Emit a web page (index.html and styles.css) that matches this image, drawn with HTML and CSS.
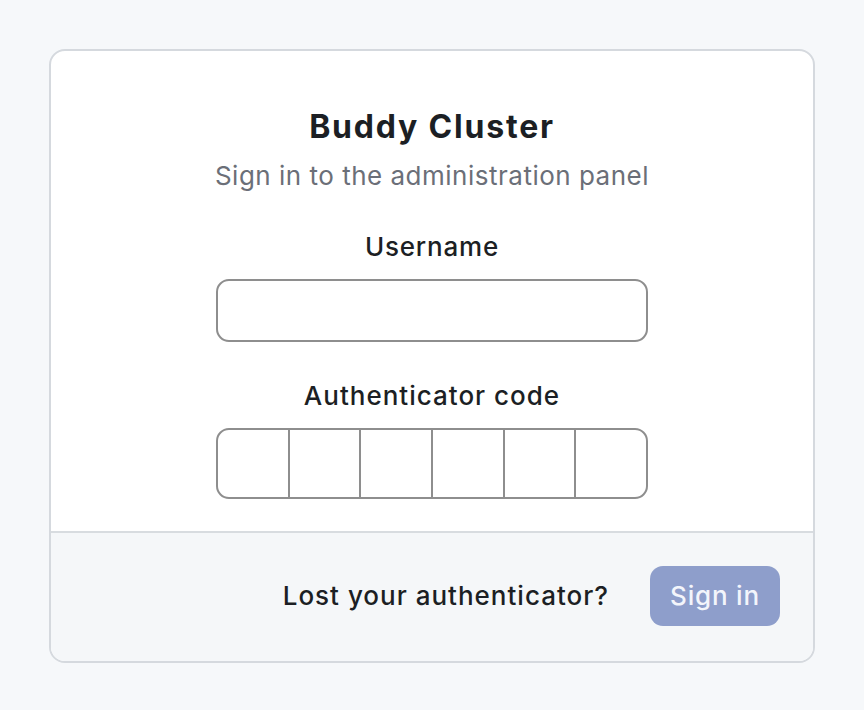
FILE: index.html
```html
<!DOCTYPE html>
<html lang="en">
<head>
<meta charset="utf-8">
<title>Buddy Cluster — Sign in</title>
<link rel="stylesheet" href="styles.css">
</head>
<body>
<main class="card">
  <form class="card-body">
    <h1 class="title">Buddy Cluster</h1>
    <p class="subtitle">Sign in to the administration panel</p>
    <label class="label" for="username">Username</label>
    <input class="text-input" id="username" type="text">
    <label class="label label-code">Authenticator code</label>
    <div class="code">
      <input class="code-cell" type="text" maxlength="1">
      <input class="code-cell" type="text" maxlength="1">
      <input class="code-cell" type="text" maxlength="1">
      <input class="code-cell" type="text" maxlength="1">
      <input class="code-cell" type="text" maxlength="1">
      <input class="code-cell" type="text" maxlength="1">
    </div>
  </form>
  <footer class="card-footer">
    <a class="lost-link" href="#">Lost your authenticator?</a>
    <button class="btn-signin" type="button">Sign in</button>
  </footer>
</main>
</body>
</html>
```

FILE: styles.css
```css
* { box-sizing: border-box; }
html, body { margin: 0; padding: 0; }
body {
  background: #f6f8fa;
  font-family: Inter, "Noto Sans", "Liberation Sans", sans-serif;
  color: #1c1f24;
  padding: 49px 0 48px;
}
.card {
  width: 766px;
  margin: 0 auto;
  background: #ffffff;
  border: 2px solid #d5d9de;
  border-radius: 16px;
  overflow: hidden;
}
.card-body {
  display: flex;
  flex-direction: column;
  align-items: center;
  padding: 56px 0 32px;
  margin: 0;
}
.title {
  margin: 0;
  font-size: 32px;
  line-height: 40px;
  font-weight: 700;
  letter-spacing: 1.8px;
  color: #1c1f24;
}
.subtitle {
  margin: 13px 0 0;
  font-size: 26px;
  line-height: 32px;
  letter-spacing: 0.5px;
  color: #6b6f78;
}
.label {
  display: block;
  margin-top: 39px;
  font-size: 26px;
  line-height: 32px;
  font-weight: 500;
  letter-spacing: 0.8px;
  color: #1c1f24;
}
.label-code { margin-top: 38px; letter-spacing: 1px; }
.text-input {
  margin-top: 16px;
  width: 432px;
  height: 63px;
  border: 2px solid #8e8e8e;
  border-radius: 13px;
  background: #fff;
  font: inherit;
  font-size: 24px;
  padding: 0 16px;
  outline: none;
}
.code {
  margin-top: 16px;
  width: 432px;
  height: 71px;
  display: flex;
  border: 2px solid #8e8e8e;
  border-radius: 13px;
  overflow: hidden;
  background: #fff;
}
.code-cell {
  flex: 1;
  min-width: 0;
  border: 0;
  border-left: 2px solid #8e8e8e;
  background: transparent;
  font: inherit;
  font-size: 28px;
  text-align: center;
  outline: none;
}
.code-cell:first-child { border-left: 0; }
.card-footer {
  border-top: 2px solid #d8dce0;
  background: #f5f7f9;
  height: 130px;
  display: flex;
  align-items: center;
  justify-content: flex-end;
  gap: 41px;
  padding: 0 33px 3px 0;
}
.lost-link {
  font-size: 26px;
  line-height: 32px;
  font-weight: 500;
  letter-spacing: 1px;
  color: #1c1f24;
  text-decoration: none;
}
.btn-signin {
  width: 130px;
  height: 60px;
  border: 0;
  border-radius: 13px;
  background: #8e9ecb;
  color: #f3f5fb;
  font: inherit;
  font-size: 26px;
  font-weight: 500;
  letter-spacing: 0.8px;
  padding: 0;
}
```
